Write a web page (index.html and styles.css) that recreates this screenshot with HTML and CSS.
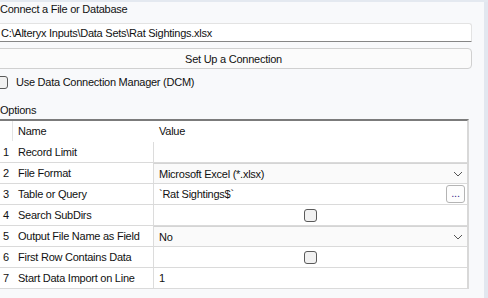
FILE: index.html
```html
<!DOCTYPE html>
<html lang="en">
<head>
    <meta charset="UTF-8">
    <title>Input Data</title>
    <link rel="stylesheet" href="styles.css">
</head>
<body>

    <div class="panel">
        <div class="content">
            <div class="section-title">Connect a File or Database</div>
            <div class="path-input">C:\Alteryx Inputs\Data Sets\Rat Sightings.xlsx</div>
            <button class="connect-btn">Set Up a Connection</button>

            <label class="dcm">
                <span class="check"></span>
                Use Data Connection Manager (DCM)
            </label>

            <div class="section-title options-title">Options</div>

            <div class="grid">
                <div class="row head">
                    <div class="num"></div>
                    <div class="name">Name</div>
                    <div class="value">Value</div>
                </div>
                <div class="row">
                    <div class="num">1</div>
                    <div class="name">Record Limit</div>
                    <div class="value"></div>
                </div>
                <div class="row">
                    <div class="num">2</div>
                    <div class="name">File Format</div>
                    <div class="value select">
                        <span>Microsoft Excel (*.xlsx)</span>
                        <svg class="chev" width="10" height="6" viewBox="0 0 10 6"><polyline points="1,1 5,5 9,1" fill="none" stroke="#555" stroke-width="1"/></svg>
                    </div>
                </div>
                <div class="row">
                    <div class="num">3</div>
                    <div class="name">Table or Query</div>
                    <div class="value">
                        <span>`Rat Sightings$`</span>
                        <span class="dots">...</span>
                    </div>
                </div>
                <div class="row">
                    <div class="num">4</div>
                    <div class="name">Search SubDirs</div>
                    <div class="value center"><span class="check"></span></div>
                </div>
                <div class="row">
                    <div class="num">5</div>
                    <div class="name">Output File Name as Field</div>
                    <div class="value select">
                        <span>No</span>
                        <svg class="chev" width="10" height="6" viewBox="0 0 10 6"><polyline points="1,1 5,5 9,1" fill="none" stroke="#555" stroke-width="1"/></svg>
                    </div>
                </div>
                <div class="row">
                    <div class="num">6</div>
                    <div class="name">First Row Contains Data</div>
                    <div class="value center"><span class="check"></span></div>
                </div>
                <div class="row">
                    <div class="num">7</div>
                    <div class="name">Start Data Import on Line</div>
                    <div class="value">1</div>
                </div>
            </div>
        </div>
        <div class="edge"></div>
    </div>

</body>
</html>
```

FILE: styles.css
```css
body {
    margin: 0;
    background-color: #f8f9fb;
    font-family: "Liberation Sans", Arial, sans-serif;
    font-size: 11px;
    letter-spacing: -0.25px;
    color: #111;
    overflow: hidden;
}

.panel {
    display: flex;
    height: 298px;
    border-top: 2px solid #e4e9f0;
    box-sizing: border-box;
}

.content {
    width: 477px;
    margin-left: -5px;
}

.edge {
    flex: 1;
    margin-left: 12px;
    background-color: #e2e7ef;
}

.section-title {
    height: 21px;
    line-height: 14px;
    padding-left: 5px;
}

.path-input {
    height: 19px;
    box-sizing: border-box;
    line-height: 18px;
    padding-left: 5px;
    background-color: #fff;
    border: 1px solid #e3e3e3;
    border-bottom: 1px solid #868686;
    border-radius: 3px 3px 0 0;
}

.connect-btn {
    display: block;
    width: 100%;
    height: 21px;
    margin-top: 6px;
    padding: 0;
    font-family: inherit;
    font-size: 11px;
    letter-spacing: -0.25px;
    color: #111;
    background-color: #fbfbfb;
    border: 1px solid #d0d0d0;
    border-radius: 4px;
}

.dcm {
    display: flex;
    align-items: center;
    gap: 8px;
    height: 14px;
    margin-top: 6px;
}

.check {
    display: inline-block;
    width: 11px;
    height: 11px;
    border: 1px solid #5a5a5a;
    border-radius: 3px;
    background-color: #f1f1f1;
}

.options-title {
    margin-top: 12px;
    height: 18px;
    line-height: 18px;
}

.grid {
    margin-left: 5px;
    width: 467px;
    background-color: #fff;
    border-top: 2px solid #7b7b7b;
    border-right: 2px solid #d8d8d8;
}

.row {
    display: grid;
    grid-template-columns: 13px 140px 1fr;
    height: 21px;
    border-bottom: 1px solid #dadada;
    box-sizing: border-box;
}

.row.head {
    border-bottom-color: #fff;
}

.row > div {
    display: flex;
    align-items: center;
}

.num {
    padding-left: 3px;
}

.head .num {
    border-right: 1px solid #e4e4e4;
}

.name {
    padding-left: 5px;
}

.value {
    padding-left: 5px;
    border-left: 1px solid #dcdcdc;
    position: relative;
}

.head .value {
    border-left-color: #fff;
}

.value.select {
    justify-content: space-between;
    background-color: #fafafa;
    border-top: 1px solid #d4d4d4;
    padding-right: 4px;
}

.value.center {
    justify-content: center;
    padding-left: 0;
}

.dots {
    position: absolute;
    right: 2px;
    top: 1px;
    width: 19px;
    height: 18px;
    box-sizing: border-box;
    border: 1px solid #b4b4b4;
    border-radius: 3px;
    text-align: center;
    line-height: 14px;
    color: #3a2a8a;
    background-color: #fdfdfd;
}
```
